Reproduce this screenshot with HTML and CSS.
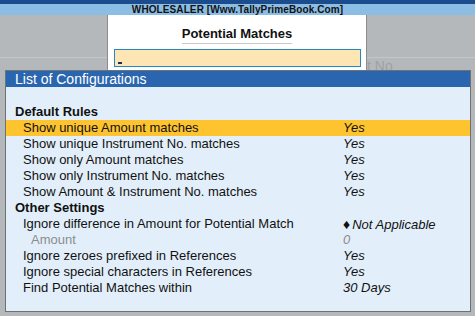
FILE: index.html
```html
<!DOCTYPE html>
<html lang="en">
<head>
    <meta charset="UTF-8">
    <title>Potential Matches</title>
    <link rel="stylesheet" href="styles.css">
</head>
<body>
    <div class="topbar"></div>
    <div class="titlebar">WHOLESALER [Www.TallyPrimeBook.Com]</div>
    <div class="workarea">
        <div class="panel">
            <div class="panel-title"><span>Potential Matches</span></div>
            <div class="search"><span class="cursor"></span></div>
        </div>
        <div class="ghost">t No</div>
    </div>

    <div class="dialog">
        <div class="dialog-head">List of Configurations</div>
        <div class="dialog-body">
            <div class="section">Default Rules</div>
            <div class="row active"><span class="label">Show unique Amount matches</span><span class="value">Yes</span></div>
            <div class="row"><span class="label">Show unique Instrument No. matches</span><span class="value">Yes</span></div>
            <div class="row"><span class="label">Show only Amount matches</span><span class="value">Yes</span></div>
            <div class="row"><span class="label">Show only Instrument No. matches</span><span class="value">Yes</span></div>
            <div class="row"><span class="label">Show Amount &amp; Instrument No. matches</span><span class="value">Yes</span></div>
            <div class="section">Other Settings</div>
            <div class="row"><span class="label">Ignore difference in Amount for Potential Match</span><span class="value"><span class="bullet">&#9830;</span>Not Applicable</span></div>
            <div class="row sub"><span class="label">Amount</span><span class="value">0</span></div>
            <div class="row"><span class="label">Ignore zeroes prefixed in References</span><span class="value">Yes</span></div>
            <div class="row"><span class="label">Ignore special characters in References</span><span class="value">Yes</span></div>
            <div class="row"><span class="label">Find Potential Matches within</span><span class="value">30 Days</span></div>
        </div>
    </div>
</body>
</html>
```

FILE: styles.css
```css
body {
    margin: 0;
    width: 475px;
    height: 316px;
    overflow: hidden;
    background: #b5b8bb;
    font-family: "Liberation Sans", Arial, sans-serif;
    position: relative;
}
.topbar {
    height: 4px;
    background: #1b4d8e;
}
.titlebar {
    height: 11px;
    line-height: 12px;
    background: #8cbde5;
    text-align: center;
    font-size: 10px;
    letter-spacing: 0.1px;
    font-weight: bold;
    color: #111;
}
.workarea {
    position: relative;
    height: 301px;
    background: linear-gradient(#b5b8bb 42px, #c4c7ca 42px, #c4c7ca 43px, #b5b8bb 43px);
}
.panel {
    margin-left: 107px;
    width: 258px;
    height: 60px;
    background: #fff;
    border-left: 1px solid #8a8c8e;
    border-right: 1px solid #8a8c8e;
}
.panel-title {
    text-align: center;
    padding-top: 9px;
    height: 25px;
}
.panel-title span {
    font-size: 13px;
    font-weight: bold;
    color: #111;
    border-bottom: 1px solid #c8c8c8;
    padding-bottom: 2px;
}
.search {
    margin-left: 6px;
    width: 245px;
    height: 16px;
    background: #fde6b4;
    border: 1px solid #1f88c9;
    position: relative;
}
.cursor {
    position: absolute;
    left: 3px;
    bottom: 2px;
    width: 4px;
    height: 2px;
    background: #1b2a5a;
}
.ghost {
    position: absolute;
    left: 367px;
    top: 43px;
    font-size: 14px;
    color: #9ea1a4;
}
.dialog {
    position: absolute;
    left: 5px;
    top: 70px;
    width: 464px;
    height: 240px;
    border: 1px solid #6f7173;
    background: #e2effa;
}
.dialog-head {
    height: 16px;
    line-height: 16px;
    background: #2a66b0;
    color: #fff;
    font-size: 14px;
    padding-left: 9px;
}
.dialog-body {
    padding-top: 17px;
    font-size: 13px;
    color: #111;
}
.section {
    height: 16px;
    line-height: 16px;
    padding-left: 9px;
    font-weight: bold;
}
.row {
    display: flex;
    height: 16px;
    line-height: 16px;
}
.row.active {
    background: #fdc430;
}
.label {
    width: 337px;
    padding-left: 17px;
    box-sizing: border-box;
}
.value {
    font-style: italic;
}
.row.sub .label {
    padding-left: 25px;
    color: #8a8c8e;
}
.row.sub .value {
    color: #8a8c8e;
}
.bullet {
    font-style: normal;
    font-size: 14px;
    margin-right: 2px;
}
```
